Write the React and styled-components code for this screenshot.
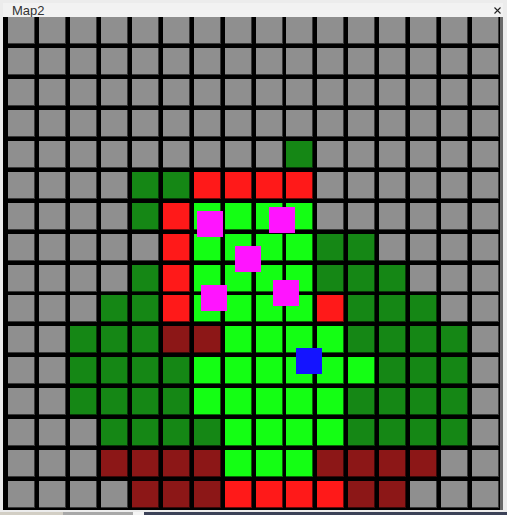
import React from "react";
import styled, { createGlobalStyle } from "styled-components";

const Global = createGlobalStyle`
  html, body { margin: 0; padding: 0; background: #f0f0f0; }
  #root { width: 507px; height: 515px; overflow: hidden; }
`;

const Desktop = styled.div`
  width: 507px;
  height: 515px;
  display: flex;
  flex-direction: column;
  overflow: hidden;
  background: #3c4258;
`;

const Win = styled.div`
  width: 507px;
  height: 512px;
  box-sizing: border-box;
  flex: none;
  display: flex;
  flex-direction: column;
  padding: 3px 4px 2px 3px;
  background: #ececec;
`;

const TitleBar = styled.div`
  height: 14px;
  flex: none;
  display: flex;
  align-items: center;
  justify-content: space-between;
  background: #f2f2f2;
`;

const Title = styled.span`
  font: 13px/14px "Liberation Sans", Arial, sans-serif;
  color: #333;
  padding-left: 9px;
  padding-top: 1px;
`;

const Close = styled.svg`
  width: 7px;
  height: 7px;
  margin-right: 2px;
  margin-top: 1px;
  display: block;
`;

const MapArea = styled.div`
  position: relative;
  flex: 1;
  background: #000;
  padding: 0.3px 0.7px 0 5.3px;
  border-right: 3px solid #696969;
`;

const Grid = styled.div`
  display: grid;
  grid-template-columns: repeat(16, 27px);
  grid-auto-rows: 27px;
  gap: 3.92px;
`;

const COLORS = {
  g: "#8f8f8f",
  d: "#158715",
  l: "#14ff14",
  r: "#ff1919",
  m: "#8c1717",
};

const Cell = styled.div`
  background: ${(p) => COLORS[p.$kind]};
  box-shadow: inset -1px -1px 0 rgba(0, 0, 0, 0.6);
`;

const Marker = styled.div`
  position: absolute;
  width: 26px;
  height: 26px;
  background: ${(p) => p.$color};
`;

const TaskStrip = styled.div`
  height: 3px;
  flex: none;
  display: flex;
`;

const TaskPiece = styled.div`
  width: ${(p) => p.$w}px;
  background: ${(p) => p.$c};
`;

const MAP = [
  "gggggggggggggggg",
  "gggggggggggggggg",
  "gggggggggggggggg",
  "gggggggggggggggg",
  "gggggggggdgggggg",
  "ggggddrrrrgggggg",
  "ggggdrllllgggggg",
  "gggggrllllddgggg",
  "ggggdrlllldddggg",
  "gggddrllllrdddgg",
  "ggdddmmllllddddg",
  "ggddddlllllldddg",
  "ggddddlllllddddg",
  "gggddddllllddddg",
  "gggmmmmlllmmmmgg",
  "ggggmmmrrrrmmggg",
];

const PINS = [
  { x: 194, y: 194, c: "#ff14ff" },
  { x: 266, y: 190, c: "#ff14ff" },
  { x: 232, y: 229, c: "#ff14ff" },
  { x: 198, y: 268, c: "#ff14ff" },
  { x: 270, y: 263, c: "#ff14ff" },
  { x: 293, y: 331, c: "#1414ff" },
];

export default function App() {
  return (
    <Desktop>
      <Global />
      <Win>
        <TitleBar>
          <Title>Map2</Title>
          <Close viewBox="0 0 7 7">
            <path d="M0.5 0.5L6.5 6.5M6.5 0.5L0.5 6.5" stroke="#222" strokeWidth="1.1" />
          </Close>
        </TitleBar>
        <MapArea>
          <Grid>
            {MAP.join("")
              .split("")
              .map((k, i) => (
                <Cell key={i} $kind={k} />
              ))}
          </Grid>
          {PINS.map((p, i) => (
            <Marker key={i} $color={p.c} style={{ left: p.x, top: p.y }} />
          ))}
        </MapArea>
      </Win>
      <TaskStrip>
        <TaskPiece $w={63} $c="#d2cec4" />
        <TaskPiece $w={70} $c="#a8a8a8" />
        <TaskPiece $w={11} $c="#f4f4f4" />
        <TaskPiece $w={363} $c="#3c4258" />
      </TaskStrip>
    </Desktop>
  );
}
